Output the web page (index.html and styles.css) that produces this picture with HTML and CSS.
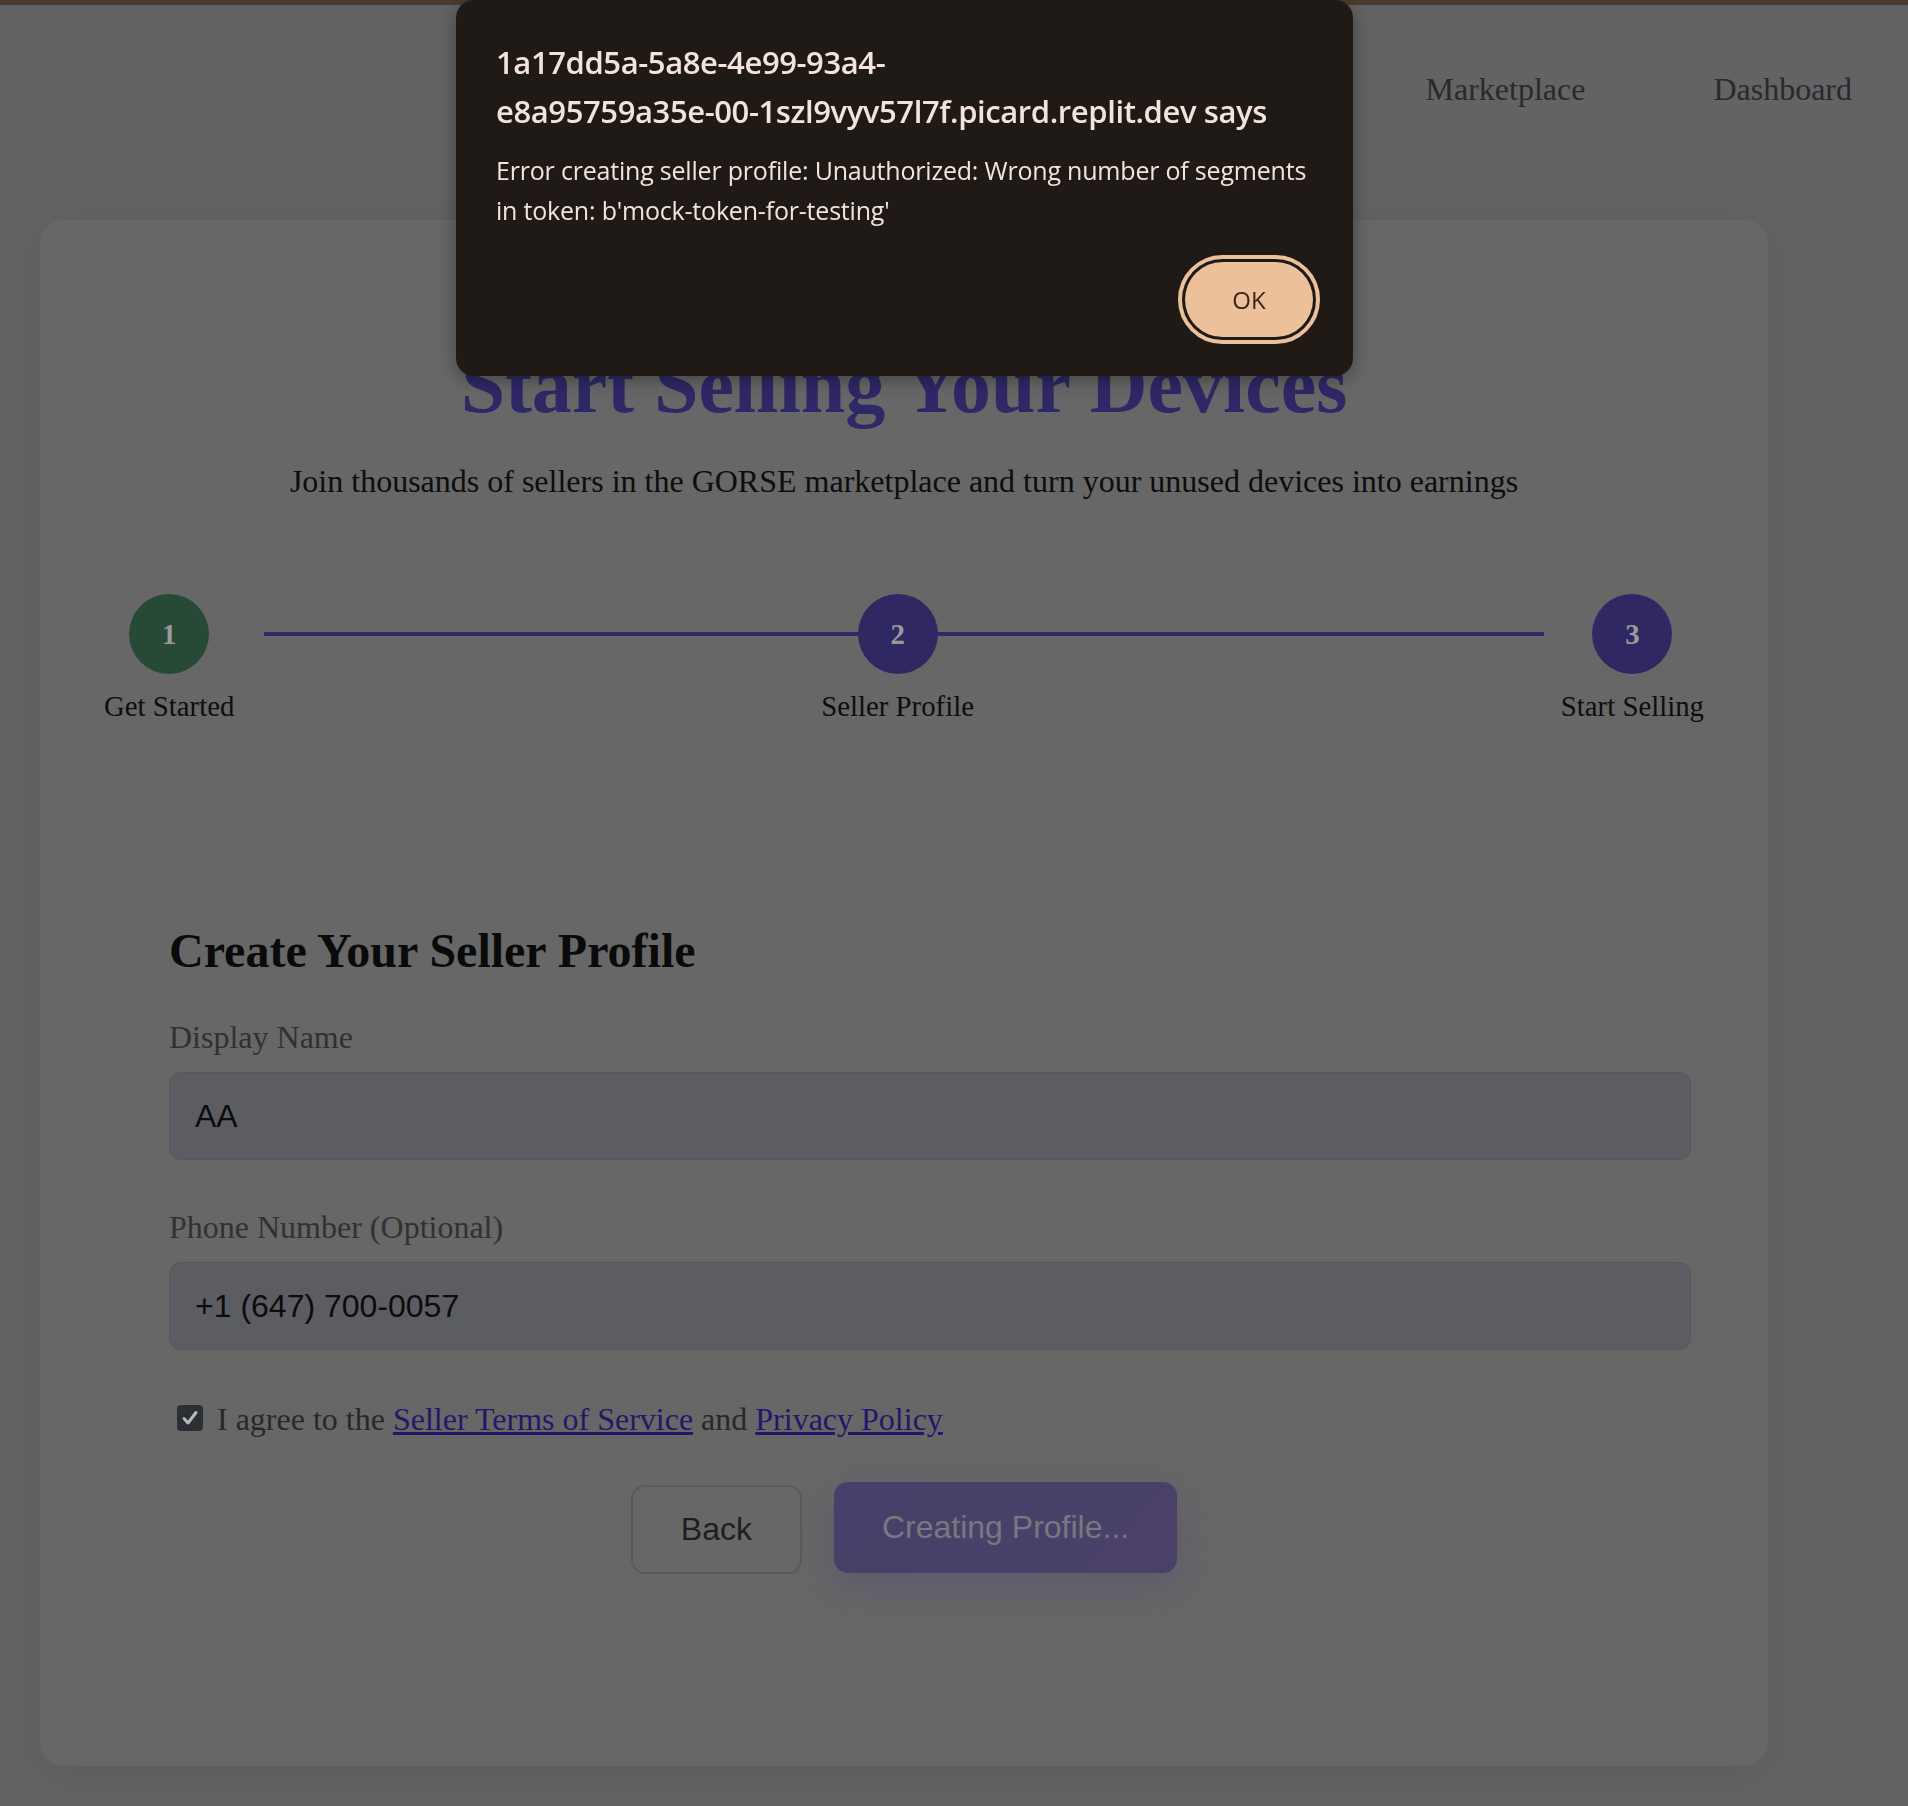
FILE: index.html
```html
<!DOCTYPE html>
<html lang="en">
<head>
<meta charset="utf-8">
<title>Become a Seller - GORSE</title>
<link rel="stylesheet" href="styles.css">
</head>
<body>
  <div class="topbar"></div>
  <header class="header">
    <nav class="nav">
      <a class="nav-link" href="#">Marketplace</a>
      <a class="nav-link" href="#">Dashboard</a>
    </nav>
  </header>

  <main class="card">
    <h1 class="title">Start Selling Your Devices</h1>
    <p class="subtitle">Join thousands of sellers in the GORSE marketplace and turn your unused devices into earnings</p>

    <div class="stepper">
      <div class="stepper-line"></div>
      <div class="step">
        <div class="step-circle step-done">1</div>
        <div class="step-label">Get Started</div>
      </div>
      <div class="step">
        <div class="step-circle step-active">2</div>
        <div class="step-label">Seller Profile</div>
      </div>
      <div class="step">
        <div class="step-circle step-active">3</div>
        <div class="step-label">Start Selling</div>
      </div>
    </div>

    <section class="form">
      <h2 class="form-title">Create Your Seller Profile</h2>
      <div class="field">
        <label class="field-label" for="dn">Display Name</label>
        <input class="field-input" id="dn" type="text" value="AA">
      </div>
      <div class="field">
        <label class="field-label" for="ph">Phone Number (Optional)</label>
        <input class="field-input" id="ph" type="text" value="+1 (647) 700-0057">
      </div>
      <div class="agree">
        <span class="check"><svg viewBox="0 0 26 26" width="26" height="26"><path d="M7 13.5 L11 18 L19 7.5" fill="none" stroke="#b9b9bb" stroke-width="3" stroke-linecap="round" stroke-linejoin="round"/></svg></span>
        <span class="agree-text">I agree to the <a class="link" href="#">Seller Terms of Service</a> and <a class="link" href="#">Privacy Policy</a></span>
      </div>
      <div class="actions">
        <button class="btn btn-back" type="button">Back</button>
        <button class="btn btn-primary" type="button">Creating Profile...</button>
      </div>
    </section>
  </main>

  <div class="dialog">
    <div class="dialog-title">1a17dd5a-5a8e-4e99-93a4-<br>e8a95759a35e-00-1szl9vyv57l7f.picard.replit.dev says</div>
    <div class="dialog-body">Error creating seller profile: Unauthorized: Wrong number of segments<br>in token: b'mock-token-for-testing'</div>
    <div class="dialog-actions">
      <button class="dialog-ok" type="button">OK</button>
    </div>
  </div>
</body>
</html>
```

FILE: styles.css
```css
html, body {
  margin: 0;
  padding: 0;
}

body {
  background: #636363;
  font-family: "Liberation Serif", "Times New Roman", serif;
  color: #0d0d0d;
  min-height: 1806px;
}

.topbar {
  height: 5px;
  background: #4b3b2f;
}

.header {
  height: 175px;
  box-sizing: border-box;
  padding: 66px 56px 0 0;
}

.nav {
  display: flex;
  justify-content: flex-end;
  gap: 128px;
}

.nav-link {
  font-size: 32px;
  line-height: 37px;
  color: #29292f;
  text-decoration: none;
}

.card {
  margin: 40px 0 0 40px;
  width: 1728px;
  box-sizing: border-box;
  padding: 64px 64px 127px;
  background: #676767;
  border-radius: 24px;
  box-shadow: 0 8px 40px rgba(0, 0, 0, 0.07);
}

.title {
  margin: 58px 0 0;
  font-size: 80px;
  line-height: 87px;
  font-weight: bold;
  text-align: center;
  color: #2f2866;
}

.subtitle {
  margin: 34px 0 0;
  font-size: 32px;
  line-height: 37px;
  text-align: center;
  color: #0d0d0d;
}

.stepper {
  position: relative;
  display: flex;
  justify-content: space-between;
  margin-top: 94px;
}

.stepper-line {
  position: absolute;
  left: 10%;
  right: 10%;
  top: 38px;
  height: 4px;
  background: #2e2a6a;
}

.step {
  position: relative;
  display: flex;
  flex-direction: column;
  align-items: center;
}

.step-circle {
  width: 80px;
  height: 80px;
  border-radius: 50%;
  display: flex;
  align-items: center;
  justify-content: center;
  font-size: 28.8px;
  font-weight: bold;
  color: #9a9a97;
}

.step-done {
  background: #274a37;
}

.step-active {
  background: #2f2862;
}

.step-label {
  margin-top: 16px;
  font-size: 28.8px;
  line-height: 33px;
  color: #0d0d0d;
}

.form {
  margin-top: 137px;
  padding: 64px 65px;
}

.form-title {
  margin: 0 0 41px;
  font-size: 48px;
  line-height: 54px;
  font-weight: bold;
  color: #0a0a0a;
}

.field {
  margin-bottom: 49px;
}

.field-label {
  display: block;
  margin-bottom: 16px;
  font-size: 32px;
  line-height: 37px;
  color: #313133;
}

.field-input {
  display: block;
  width: 100%;
  height: 40px;
  box-sizing: content-box;
  padding: 23px 25px;
  margin: 0;
  border: 1px solid #56575b;
  border-radius: 12px;
  background: #5c5d63;
  font-family: "Liberation Sans", Arial, sans-serif;
  font-size: 32px;
  line-height: 40px;
  color: #0c0c0c;
  outline: none;
}

.agree {
  display: flex;
  align-items: center;
  margin-top: 51px;
  font-size: 32px;
  line-height: 37px;
  color: #28282a;
}

.check {
  width: 26px;
  height: 26px;
  margin: -4px 14px 0 8px;
  border-radius: 4px;
  background: #2b2e33;
  display: flex;
}

.link {
  color: #221868;
  text-decoration: underline;
}

.actions {
  display: flex;
  justify-content: center;
  align-items: center;
  gap: 32px;
  margin-top: 46px;
}

.btn {
  font-family: "Liberation Sans", Arial, sans-serif;
  font-size: 32px;
  line-height: 37px;
  border-radius: 14px;
  cursor: pointer;
}

.btn-back {
  padding: 24px 48px;
  border: 2px solid #5a5a5e;
  background: transparent;
  color: #1e1e22;
}

.btn-primary {
  padding: 27px 48px;
  border: none;
  background: linear-gradient(135deg, #45416a, #4b4068);
  color: #78787e;
  transform: translateY(-2px);
  box-shadow: 0 14px 36px rgba(75, 65, 120, 0.35);
}

.dialog {
  position: fixed;
  left: 456px;
  top: 0;
  width: 897px;
  box-sizing: border-box;
  padding: 38px 40px 39px;
  background: #201a17;
  border-radius: 18px;
  box-shadow: 0 4px 18px rgba(0, 0, 0, 0.35);
  font-family: "Open Sans", "Noto Sans", sans-serif;
  color: #f2e4dc;
}

.dialog-title {
  font-size: 31px;
  line-height: 49px;
  font-weight: 600;
  letter-spacing: -0.4px;
}

.dialog-body {
  margin-top: 14px;
  font-size: 25px;
  line-height: 40px;
  letter-spacing: -0.2px;
}

.dialog-actions {
  display: flex;
  justify-content: flex-end;
  margin-top: 32px;
}

.dialog-ok {
  width: 128px;
  height: 75px;
  border: none;
  border-radius: 38px;
  background: #ecc09a;
  color: #3b2412;
  font-family: "Open Sans", "Noto Sans", sans-serif;
  font-size: 24px;
  outline: 4px solid #ecc09a;
  outline-offset: 3px;
  padding: 0;
}
```
